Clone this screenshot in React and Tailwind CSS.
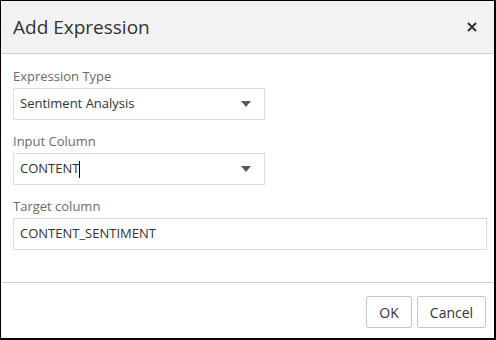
import React from "react";

const Caret = () => (
  <svg width="10" height="6" viewBox="0 0 10 6" className="shrink-0">
    <path d="M0 0 H10 L5 6 Z" fill="#595959" />
  </svg>
);

const Field = ({ label, children }) => (
  <div className="mb-[13px]">
    <div className="h-[17px] mb-[3px] text-[13px] leading-[17px] text-[#6b6b6b]">{label}</div>
    {children}
  </div>
);

const App = () => {
  return (
    <div
      className="w-[496px] h-[340px] bg-white border border-black border-r-2 border-b-2 flex flex-col text-[#333]"
      style={{ fontFamily: '"Open Sans", "Noto Sans", sans-serif' }}
    >
      <div className="h-[53px] shrink-0 bg-[#f2f2f2] border-b border-[#cfcfcf] flex items-center justify-between pl-3 pr-[17px]">
        <h1 className="text-[19px] text-[#333]">Add Expression</h1>
        <svg width="10" height="10" viewBox="0 0 10 10">
          <path d="M1 1 L9 9 M9 1 L1 9" stroke="#333" strokeWidth="2" />
        </svg>
      </div>

      <div className="flex-1 pt-[14px] pl-3">
        <Field label="Expression Type">
          <div className="w-[252px] h-[32px] border border-[#dcdcdc] flex items-center justify-between pl-[6px] pr-[13px] text-[13px]">
            <span>Sentiment Analysis</span>
            <Caret />
          </div>
        </Field>
        <Field label="Input Column">
          <div className="w-[252px] h-[32px] border border-[#dcdcdc] flex items-center justify-between pl-[6px] pr-[13px] text-[13px]">
            <span className="flex items-center">
              CONTENT
              <span className="inline-block w-px h-[17px] bg-black" />
            </span>
            <Caret />
          </div>
        </Field>
        <Field label="Target column">
          <div className="w-[474px] h-[32px] border border-[#dcdcdc] flex items-center pl-[6px] text-[13px]">
            CONTENT_SENTIMENT
          </div>
        </Field>
      </div>

      <div className="h-[56px] shrink-0 border-t border-[#cfcfcf] flex justify-end items-start gap-[5px] pt-[13px] pr-2">
        <button className="w-[46px] h-[32px] border border-[#c6c6c6] rounded-[2px] bg-white text-[14px] text-[#333]">
          OK
        </button>
        <button className="w-[69px] h-[32px] border border-[#c6c6c6] rounded-[2px] bg-white text-[14px] text-[#333]">
          Cancel
        </button>
      </div>
    </div>
  );
};

export default App;
